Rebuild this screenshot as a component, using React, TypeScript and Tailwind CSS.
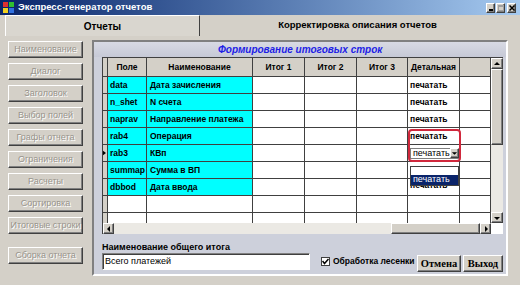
import React from "react";

const sideButtons = [
  "Наименование",
  "Диалог",
  "Заголовок",
  "Выбор полей",
  "Графы отчета",
  "Ограничения",
  "Расчеты",
  "Сортировка",
  "Итоговые строки",
];

type Row = { field: string; name: string; detail: string };

const rows: Row[] = [
  { field: "data", name: "Дата зачисления", detail: "печатать" },
  { field: "n_shet", name: "N счета", detail: "печатать" },
  { field: "naprav", name: "Направление платежа", detail: "печатать" },
  { field: "rab4", name: "Операция", detail: "печатать" },
  { field: "rab3", name: "КВп", detail: "combo" },
  { field: "summap", name: "Сумма в ВП", detail: "" },
  { field: "dbbod", name: "Дата ввода", detail: "" },
  { field: "", name: "", detail: "" },
];

// column widths: indicator, Поле, Наименование, Итог 1..3, Детальная, empty
const cols = [
  "w-[5px]",
  "w-[39px]",
  "w-[106px]",
  "w-[52px]",
  "w-[52px]",
  "w-[51px]",
  "w-[52px]",
  "w-[31px]",
];

const headers = ["", "Поле", "Наименование", "Итог 1", "Итог 2", "Итог 3", "Детальная", ""];

const raised =
  "border border-t-white border-l-white border-r-[#404040] border-b-[#404040] shadow-[inset_-1px_-1px_0_#808080]";

const Arrow = ({ dir }: { dir: "up" | "down" | "left" | "right" }) => {
  const pts = {
    up: "1,5 4,2 7,5",
    down: "1,3 4,6 7,3",
    left: "5,1 2,4 5,7",
    right: "3,1 6,4 3,7",
  }[dir];
  return (
    <svg width="8" height="8" viewBox="0 0 8 8">
      <polygon points={pts} fill="#000" />
    </svg>
  );
};

const SideButton = ({ label, className = "" }: { label: string; className?: string }) => (
  <div
    className={`flex h-[17px] w-[75px] items-center justify-center bg-[#d4d0c8] text-[9px] whitespace-nowrap text-[#98948c] [text-shadow:1px_1px_0_#fff] ${raised} ${className}`}
  >
    {label}
  </div>
);

const Grid = () => (
  <div className="relative flex h-[177px] w-[401px] flex-col border-t border-l border-[#404040] bg-white text-[8.5px] font-bold text-black">
    <div className="flex h-[165px]">
      <div className="flex w-[388px] flex-col overflow-hidden">
        <div className="flex h-[19px] shrink-0 bg-[#d4d0c8]">
          {headers.map((h, i) => (
            <div
              key={i}
              className={`${cols[i]} flex shrink-0 items-center justify-center border-r border-b border-[#404040]`}
            >
              {h}
            </div>
          ))}
        </div>
        {rows.map((r, ri) => (
          <div key={ri} className="flex h-[17px] shrink-0">
            <div
              className={`${cols[0]} flex shrink-0 items-center border-r border-b border-[#404040] bg-[#d4d0c8]`}
            >
              {r.field === "rab3" && (
                <svg width="4" height="6" viewBox="0 0 4 6" className="-ml-px">
                  <polygon points="0,0 4,3 0,6" fill="#000" />
                </svg>
              )}
            </div>
            <div
              className={`${cols[1]} flex shrink-0 items-center border-r border-b border-[#404040] pl-[2px] ${
                r.field ? "bg-[#00ffff]" : ""
              }`}
            >
              {r.field}
            </div>
            <div
              className={`${cols[2]} flex shrink-0 items-center border-r border-b border-[#404040] pl-[3px] ${
                r.field ? "bg-[#00ffff]" : ""
              }`}
            >
              {r.name}
            </div>
            <div className={`${cols[3]} shrink-0 border-r border-b border-[#404040]`} />
            <div className={`${cols[4]} shrink-0 border-r border-b border-[#404040]`} />
            <div className={`${cols[5]} shrink-0 border-r border-b border-[#404040]`} />
            <div
              className={`${cols[6]} flex shrink-0 items-center border-r border-b border-[#404040] pl-[2px]`}
            >
              {r.detail === "combo" ? (
                <div className="flex h-[11px] w-[49px] items-center border border-[#7f7f7f] bg-white pl-[2px] text-[9px] font-normal">
                  <span className="flex-1 leading-none">печатать</span>
                  <div className={`flex h-[10px] w-[9px] items-center justify-center bg-[#d4d0c8] ${raised}`}>
                    <Arrow dir="down" />
                  </div>
                </div>
              ) : (
                r.detail
              )}
            </div>
            <div className={`${cols[7]} shrink-0 border-r border-b border-[#404040]`} />
          </div>
        ))}
        <div className="flex h-[10px] shrink-0">
          {cols.map((c, i) => (
            <div
              key={i}
              className={`${c} shrink-0 border-r border-[#404040] ${i === 0 ? "bg-[#d4d0c8]" : ""}`}
            />
          ))}
        </div>
      </div>
      {/* vertical scrollbar */}
      <div className="flex w-[12px] flex-col bg-[#ebe9e4]">
        <div className={`flex h-[11px] items-center justify-center bg-[#d4d0c8] ${raised}`}>
          <Arrow dir="up" />
        </div>
        <div className={`h-[76px] bg-[#d4d0c8] ${raised}`} />
        <div className="flex-1" />
        <div className={`flex h-[11px] items-center justify-center bg-[#d4d0c8] ${raised}`}>
          <Arrow dir="down" />
        </div>
      </div>
    </div>
    {/* horizontal scrollbar */}
    <div className="flex h-[11px] bg-[#ebe9e4]">
      <div className={`flex w-[11px] items-center justify-center bg-[#d4d0c8] ${raised}`}>
        <Arrow dir="left" />
      </div>
      <div className="w-[277px]" />
      <div className={`w-[89px] bg-[#d4d0c8] ${raised}`} />
      <div className={`flex w-[11px] items-center justify-center bg-[#d4d0c8] ${raised}`}>
        <Arrow dir="right" />
      </div>
      <div className="w-[12px] bg-white" />
    </div>

    {/* highlight around Детальная */}
    <div className="absolute top-[71px] left-[305px] h-[33px] w-[53px] rounded-[4px] border-2 border-[#d0283c]" />

    {/* row text showing under the open list */}
    <div className="absolute top-[126px] left-[307px] h-[7px] overflow-hidden leading-[7px]">
      <span className="relative -top-[2px]">печатать</span>
    </div>

    {/* dropdown list */}
    <div className="absolute top-[108px] left-[307px] flex h-[20px] w-[49px] flex-col justify-end border border-[#404040] bg-white">
      <div className="flex h-[10px] items-center bg-[#0a246a] pl-[2px] text-[9px] font-normal text-white">
        печатать
      </div>
    </div>
  </div>
);

export default function App() {
  return (
    <div className="flex h-[285px] w-[520px] flex-col overflow-hidden bg-[#d4d0c8] font-['Liberation_Sans',Arial,sans-serif]">
      {/* title bar */}
      <div className="flex h-[15px] shrink-0 items-center bg-gradient-to-r from-[#0a246a] to-[#a6caf0] pr-[4px] pl-[3px]">
        <svg width="11" height="11" viewBox="0 0 11 11">
          <rect x="0" y="0" width="5" height="5" fill="#e03030" />
          <rect x="6" y="0" width="5" height="5" fill="#30c030" />
          <rect x="0" y="6" width="5" height="5" fill="#f0d020" />
          <rect x="6" y="6" width="5" height="5" fill="#3070e0" />
        </svg>
        <span className="ml-[4px] text-[9.5px] font-bold text-white">Экспресс-генератор отчетов</span>
        <div className="ml-auto flex gap-[1px]">
          <div className={`flex h-[10px] w-[9px] items-end justify-center bg-[#d4d0c8] pb-[1px] ${raised}`}>
            <div className="h-[2px] w-[4px] bg-black" />
          </div>
          <div className={`flex h-[10px] w-[9px] items-center justify-center bg-[#d4d0c8] ${raised}`}>
            <div className="h-[6px] w-[6px] border border-t-2 border-[#a0a0a0]" />
          </div>
          <div className={`ml-[1px] flex h-[10px] w-[9px] items-center justify-center bg-[#d4d0c8] ${raised}`}>
            <svg width="6" height="6" viewBox="0 0 6 6">
              <path d="M0.5 0.5 L5.5 5.5 M5.5 0.5 L0.5 5.5" stroke="#000" strokeWidth="1.5" />
            </svg>
          </div>
        </div>
      </div>

      {/* tabs */}
      <div className="flex h-[21px] shrink-0 pr-[5px] pl-[5px] text-[10px] font-bold text-black">
        <div className="flex w-[195px] items-center justify-center border-t border-r border-l border-t-white border-r-[#404040] border-l-white bg-[#d9d6cf]">
          Отчеты
        </div>
        <div className="flex flex-1 items-center justify-center text-[9.5px]">
          Корректировка описания отчетов
        </div>
      </div>

      {/* body */}
      <div className="flex flex-1">
        <div className="flex w-[92px] shrink-0 flex-col gap-[5px] pt-[5px] pl-[8px]">
          {sideButtons.map((b) => (
            <SideButton key={b} label={b} />
          ))}
          <SideButton label="Сборка отчета" className="mt-[8px]" />
        </div>

        <div className="mt-[4px] flex h-[236px] w-[416px] flex-col border-2 border-t-[#808080] border-r-white border-b-white border-l-[#808080] bg-[#cdd0db]">
          <div className="flex h-[15px] shrink-0 items-center bg-gradient-to-b from-[#d8dae4] to-[#c6c9d6] pl-[124px] text-[10px] font-bold text-[#1e1ee6] italic">
            Формирование итоговых строк
          </div>
          <div className="ml-[8px]">
            <Grid />
          </div>
          <div className="mt-[8px] ml-[8px] flex items-end pr-[3px]">
            <div className="mb-[2px] flex w-[208px] flex-col">
              <div className="h-[11px] text-[9px] leading-[11px] font-bold text-black">
                Наименование общего итога
              </div>
              <div className="flex h-[17px] items-center border border-t-[#808080] border-r-white border-b-white border-l-[#808080] bg-white pl-[2px] text-[9px] text-black shadow-[inset_1px_1px_0_#404040]">
                Всего платежей
              </div>
            </div>
            <div className="mb-[4px] ml-[11px] flex items-center">
              <div className="flex h-[9px] w-[9px] items-center justify-center border border-[#404040] bg-white">
                <svg width="7" height="7" viewBox="0 0 7 7">
                  <path d="M0.5 3 L2.5 5.5 L6.5 1" stroke="#000" strokeWidth="1.5" fill="none" />
                </svg>
              </div>
              <span className="ml-[3px] text-[8.5px] font-bold text-black">Обработка лесенки</span>
            </div>
            <div className="ml-auto flex gap-[2px] font-['Liberation_Serif',serif] text-[10.5px] font-bold text-black">
              <div className={`flex h-[17px] w-[44px] items-center justify-center bg-[#d4d0c8] ${raised}`}>
                Отмена
              </div>
              <div className={`flex h-[17px] w-[40px] items-center justify-center bg-[#d4d0c8] ${raised}`}>
                Выход
              </div>
            </div>
          </div>
        </div>
      </div>
    </div>
  );
}
